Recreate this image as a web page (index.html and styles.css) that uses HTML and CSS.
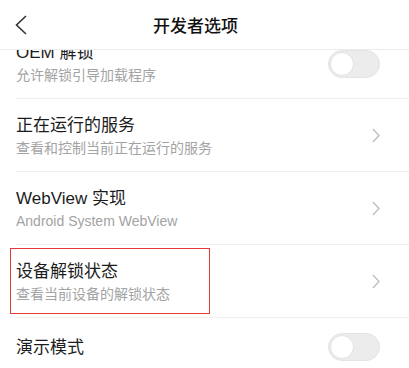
FILE: index.html
```html
<!DOCTYPE html>
<html>
	<head>
		<meta charset="UTF-8">
		<title>开发者选项</title>
		<link rel="stylesheet" href="styles.css">
	</head>
	<body>
		<div class="page">
			<header class="bar">
				<svg class="back" width="12" height="20" viewBox="0 0 12 20">
					<polyline points="11,1 1.5,10 11,19" fill="none" stroke="#333" stroke-width="1.6"/>
				</svg>
				<h1 class="bar-title">开发者选项</h1>
			</header>
			<div class="scroll">
				<ul class="list">
					<li class="row">
						<div class="text">
							<p class="name">OEM 解锁</p>
							<p class="desc">允许解锁引导加载程序</p>
						</div>
						<span class="switch"><i></i></span>
					</li>
					<li class="row">
						<div class="text">
							<p class="name">正在运行的服务</p>
							<p class="desc">查看和控制当前正在运行的服务</p>
						</div>
						<svg class="more" width="8" height="15" viewBox="0 0 8 15">
							<polyline points="1,1 7,7.5 1,14" fill="none" stroke="#bdbdbd" stroke-width="1.3"/>
						</svg>
					</li>
					<li class="row">
						<div class="text">
							<p class="name">WebView 实现</p>
							<p class="desc">Android System WebView</p>
						</div>
						<svg class="more" width="8" height="15" viewBox="0 0 8 15">
							<polyline points="1,1 7,7.5 1,14" fill="none" stroke="#bdbdbd" stroke-width="1.3"/>
						</svg>
					</li>
					<li class="row marked">
						<div class="text">
							<p class="name">设备解锁状态</p>
							<p class="desc">查看当前设备的解锁状态</p>
						</div>
						<svg class="more" width="8" height="15" viewBox="0 0 8 15">
							<polyline points="1,1 7,7.5 1,14" fill="none" stroke="#bdbdbd" stroke-width="1.3"/>
						</svg>
						<span class="mark"></span>
					</li>
					<li class="row single">
						<div class="text">
							<p class="name">演示模式</p>
						</div>
						<span class="switch"><i></i></span>
					</li>
				</ul>
			</div>
		</div>
	</body>
</html>
```
FILE: styles.css
```css
*{
	margin: 0;
	padding: 0;
	box-sizing: border-box;
}
li{
	list-style: none;
}
body{
	background: #fff;
	font-family: "Liberation Sans", "Noto Sans CJK SC", sans-serif;
	color: #1c1c1c;
	overflow: hidden;
}
.page{
	width: 409px;
	height: 368px;
	overflow: hidden;
}
.bar{
	height: 50px;
	border-bottom: 1px solid #ececec;
	display: flex;
	align-items: center;
	padding-left: 15px;
}
.back{
	display: block;
	margin-top: 1px;
}
.bar-title{
	margin-left: 126px;
	font-size: 17px;
	font-weight: 500;
	line-height: 22px;
	color: #111;
	font-family: "Noto Sans CJK SC", sans-serif;
}
.scroll{
	height: 318px;
	overflow: hidden;
}
.list{
	margin-top: -24px;
}
.row{
	margin-left: 16px;
	height: 73px;
	padding: 16px 29px 13px 0;
	border-bottom: 1px solid #efefef;
	display: flex;
	align-items: center;
	position: relative;
}
.row.single{
	align-items: flex-start;
	padding-top: 15px;
}
.text{
	flex: 1;
	align-self: flex-start;
}
.single .text{
	padding-top: 4px;
}
.name{
	font-size: 17px;
	line-height: 22px;
	color: #1c1c1c;
}
.desc{
	margin-top: 1px;
	font-size: 14px;
	line-height: 20px;
	color: #a3a3a3;
}
.more{
	display: block;
	margin-top: -2px;
}
.switch{
	width: 52px;
	height: 28px;
	border-radius: 14px;
	background: #ececec;
	border: 1px solid #e4e4e4;
	padding: 1px;
	display: block;
}
.switch i{
	display: block;
	width: 24px;
	height: 24px;
	border-radius: 50%;
	background: #fff;
	border: 1px solid #e2e2e2;
}
.mark{
	position: absolute;
	left: -6px;
	top: 3px;
	width: 200px;
	height: 66px;
	border: 1px solid #e53935;
}
```
